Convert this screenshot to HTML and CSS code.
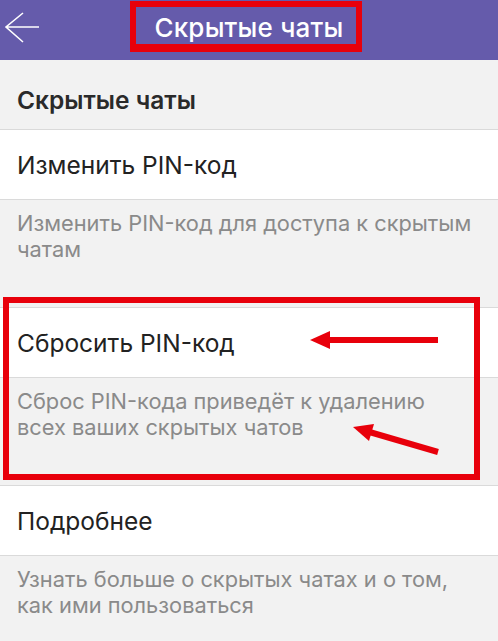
FILE: index.html
```html
<!DOCTYPE html>
<html lang="ru">
<head>
<meta charset="utf-8">
<title>Скрытые чаты</title>
<link rel="stylesheet" href="styles.css">
</head>
<body>
<div class="screen">
  <header class="topbar">
    <svg class="back" width="40" height="40" viewBox="0 0 40 40">
      <path d="M23 13 L6 27 L23 42 M6 27 H39" fill="none" stroke="#fff" stroke-width="1.6" transform="translate(0,-7)"/>
    </svg>
    <h1 class="title">Скрытые чаты</h1>
  </header>
  <div class="section-head">Скрытые чаты</div>
  <div class="row">Изменить PIN-код</div>
  <div class="desc">Изменить PIN-код для доступа к скрытым чатам</div>
  <div class="row">Сбросить PIN-код</div>
  <div class="desc">Сброс PIN-кода приведёт к удалению всех ваших скрытых чатов</div>
  <div class="row">Подробнее</div>
  <div class="desc">Узнать больше о скрытых чатах и о том, как ими пользоваться</div>

  <div class="mark mark-title"></div>
  <div class="mark mark-reset"></div>
  <svg class="arrows" width="498" height="641" viewBox="0 0 498 641">
    <line x1="438" y1="340" x2="322" y2="340" stroke="#e8000b" stroke-width="6"/>
    <polygon points="310,340 330,331 330,349" fill="#e8000b"/>
    <line x1="438" y1="452" x2="366" y2="431" stroke="#e8000b" stroke-width="6"/>
    <polygon points="353,427 374,424 369,441" fill="#e8000b"/>
  </svg>
</div>
</body>
</html>
```
FILE: styles.css
```css
* { box-sizing: border-box; margin: 0; padding: 0; }
html, body { width: 498px; height: 641px; overflow: hidden; }
body { background: #f2f2f2; font-family: Inter, "Liberation Sans", sans-serif; }
.screen { position: relative; width: 498px; height: 641px; overflow: hidden; }
.topbar {
  height: 60px; background: #655bab;
  display: flex; align-items: center; justify-content: center;
  position: relative;
}
.back { position: absolute; left: 0; top: 0; width: 40px; height: 40px; margin: 7px 0 0 0; }
.title { color: #fff; font-size: 26px; font-weight: 500; margin-top: -6px; letter-spacing: 0.2px; }
.section-head {
  height: 70px; background: #f2f2f2; color: #2a2a2a;
  font-size: 24.5px; font-weight: 600;
  display: flex; align-items: center; padding: 10px 17px 0;
  border-bottom: 1px solid #dadada;
}
.row {
  height: 70px; background: #fff; color: #222;
  font-size: 24.5px; display: flex; align-items: center; padding: 0 17px;
  border-bottom: 1px solid #dadada;
}
.desc {
  height: 108px; background: #f2f2f2; color: #8a8a8a;
  font-size: 21.8px; line-height: 26px; padding: 10px 22px 0 17px;
  border-bottom: 1px solid #dadada;
}
.mark { position: absolute; border: 6px solid #e8000b; }
.mark-title { left: 130px; top: 1px; width: 232px; height: 51px; border-width: 6px 6px 8px; }
.mark-reset { left: 3px; top: 297px; width: 477px; height: 183px; }
.arrows { position: absolute; left: 0; top: 0; }
```
